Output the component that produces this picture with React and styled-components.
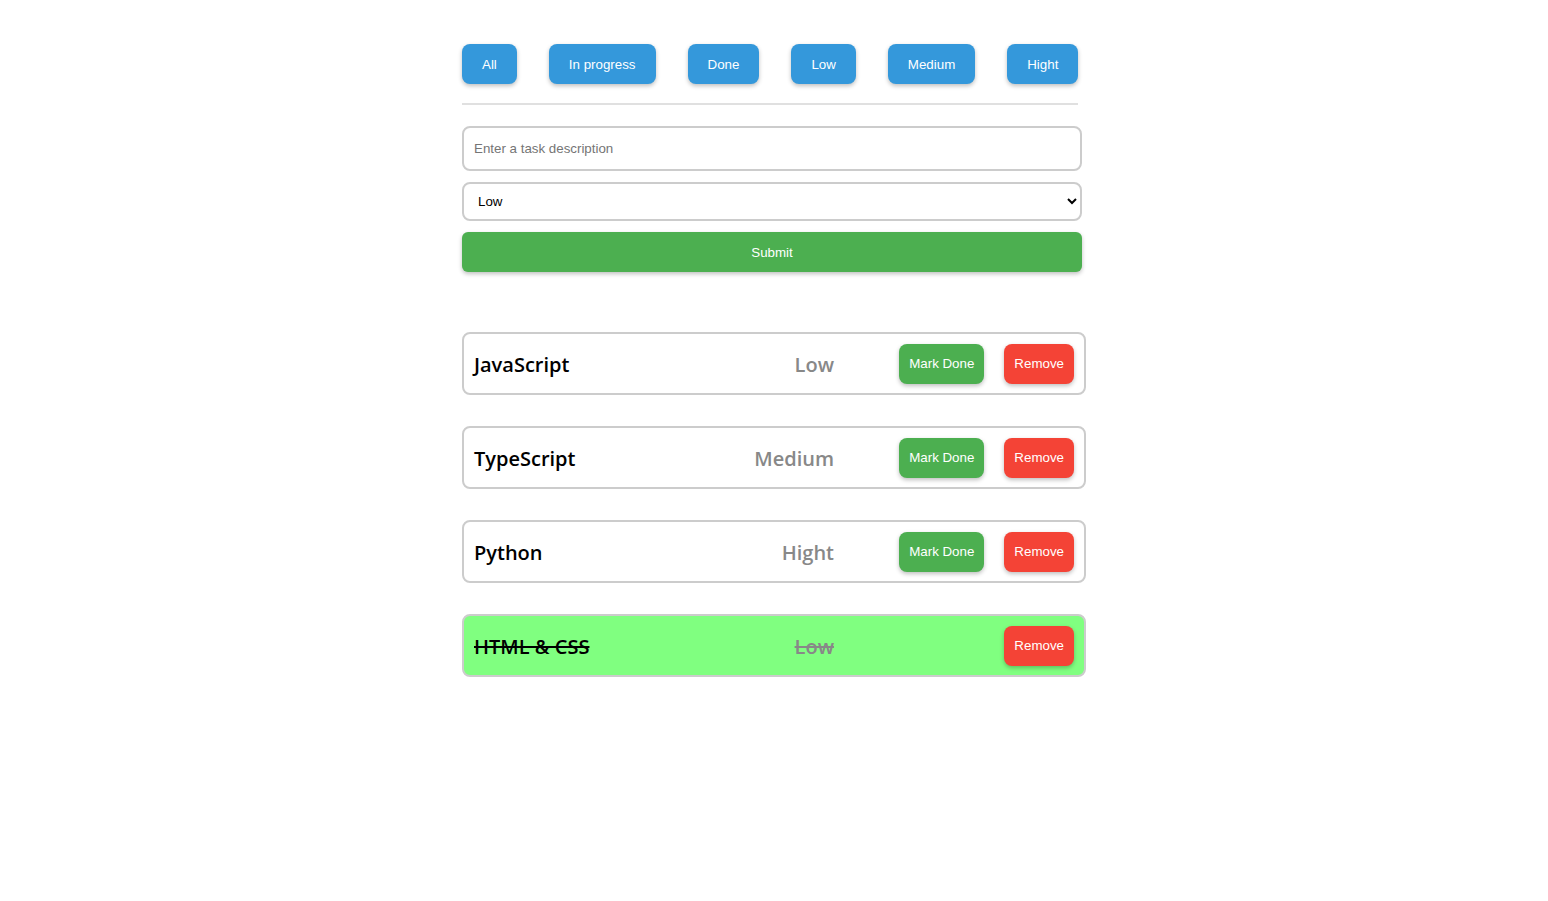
import React, { useState } from "react";
import styled, { createGlobalStyle } from "styled-components";

const GlobalStyle = createGlobalStyle`
  body {
    margin: 0;
    background: #fff;
    font-family: "Liberation Sans", Arial, sans-serif;
  }
`;

const Page = styled.div`
  width: 624px;
  margin: 0 auto;
  padding-top: 44px;
`;

const Filters = styled.div`
  width: 616px;
  display: flex;
  gap: 32px;
  padding-bottom: 19px;
  border-bottom: 2px solid #e0e0e0;
`;

const FilterButton = styled.button`
  flex-shrink: 0;
  white-space: nowrap;
  height: 40px;
  padding: 0 20px;
  border: none;
  border-radius: 8px;
  background: #3498db;
  color: #fff;
  font-family: "Liberation Sans", Arial, sans-serif;
  font-size: 13.33px;
  font-weight: 500;
  box-shadow: 0 2px 4px rgba(0, 0, 0, 0.25);
  cursor: pointer;
`;

const Form = styled.form`
  width: 620px;
  margin-top: 21px;
  display: flex;
  flex-direction: column;
  gap: 11px;
`;

const TextInput = styled.input`
  box-sizing: border-box;
  height: 45px;
  padding: 0 10px;
  border: 2px solid #ccc;
  border-radius: 8px;
  font-family: "Liberation Sans", Arial, sans-serif;
  font-size: 13.33px;
  outline: none;
  &::placeholder {
    color: #757575;
  }
`;

const Select = styled.select`
  box-sizing: border-box;
  height: 39px;
  padding: 0 10px;
  border: 2px solid #ccc;
  border-radius: 8px;
  background: #fff;
  color: #000;
  font-family: "Liberation Sans", Arial, sans-serif;
  font-size: 13.33px;
  outline: none;
`;

const SubmitButton = styled.button`
  height: 40px;
  border: none;
  border-radius: 6px;
  background: #4caf50;
  color: #fff;
  font-family: "Liberation Sans", Arial, sans-serif;
  font-size: 13.33px;
  box-shadow: 0 2px 4px rgba(0, 0, 0, 0.25);
  cursor: pointer;
`;

const TaskList = styled.div`
  margin-top: 60px;
  display: flex;
  flex-direction: column;
  gap: 31px;
`;

const Card = styled.div`
  box-sizing: border-box;
  height: 63px;
  padding: 1px 10px 0;
  border: 2px solid #ccc;
  border-radius: 8px;
  background: ${(p) => (p.$done ? "#80ff80" : "#fff")};
  display: grid;
  grid-template-columns: 1fr auto 175px;
  column-gap: 65px;
  align-items: center;
  font-family: "Open Sans", "Noto Sans", sans-serif;
`;

const Title = styled.span`
  font-size: 20px;
  font-weight: 600;
  color: #000;
  text-decoration: ${(p) => (p.$done ? "line-through" : "none")};
`;

const Priority = styled.span`
  font-size: 20px;
  font-weight: 600;
  color: #888;
  text-align: right;
  text-decoration: ${(p) => (p.$done ? "line-through" : "none")};
`;

const Actions = styled.div`
  display: flex;
  justify-content: flex-end;
  gap: 20px;
  margin-top: -1px;
`;

const ActionButton = styled.button`
  white-space: nowrap;
  height: 40px;
  padding: 0 10px;
  border: none;
  border-radius: 8px;
  background: ${(p) => (p.$danger ? "#f44336" : "#4caf50")};
  color: #fff;
  font-family: "Liberation Sans", Arial, sans-serif;
  font-size: 13.33px;
  box-shadow: 0 2px 4px rgba(0, 0, 0, 0.25);
  cursor: pointer;
`;

const filters = ["All", "In progress", "Done", "Low", "Medium", "Hight"];

const initialTasks = [
  { id: 1, title: "JavaScript", priority: "Low", done: false },
  { id: 2, title: "TypeScript", priority: "Medium", done: false },
  { id: 3, title: "Python", priority: "Hight", done: false },
  { id: 4, title: "HTML & CSS", priority: "Low", done: true },
];

function App() {
  const [tasks, setTasks] = useState(initialTasks);
  const [text, setText] = useState("");
  const [priority, setPriority] = useState("Low");

  const handleSubmit = (e) => {
    e.preventDefault();
    if (text !== "") {
      setTasks([...tasks, { id: Date.now(), title: text, priority, done: false }]);
      setText("");
    }
  };

  return (
    <>
      <GlobalStyle />
      <Page>
        <Filters>
          {filters.map((f) => (
            <FilterButton key={f}>{f}</FilterButton>
          ))}
        </Filters>
        <Form onSubmit={handleSubmit}>
          <TextInput
            type="text"
            placeholder="Enter a task description"
            value={text}
            onChange={(e) => setText(e.target.value)}
          />
          <Select value={priority} onChange={(e) => setPriority(e.target.value)}>
            <option>Low</option>
            <option>Medium</option>
            <option>Hight</option>
          </Select>
          <SubmitButton type="submit">Submit</SubmitButton>
        </Form>
        <TaskList>
          {tasks.map((t) => (
            <Card key={t.id} $done={t.done}>
              <Title $done={t.done}>{t.title}</Title>
              <Priority $done={t.done}>{t.priority}</Priority>
              <Actions>
                {!t.done && (
                  <ActionButton
                    onClick={() =>
                      setTasks(tasks.map((x) => (x.id === t.id ? { ...x, done: true } : x)))
                    }
                  >
                    Mark Done
                  </ActionButton>
                )}
                <ActionButton
                  $danger
                  onClick={() => setTasks(tasks.filter((x) => x.id !== t.id))}
                >
                  Remove
                </ActionButton>
              </Actions>
            </Card>
          ))}
        </TaskList>
      </Page>
    </>
  );
}

export default App;
